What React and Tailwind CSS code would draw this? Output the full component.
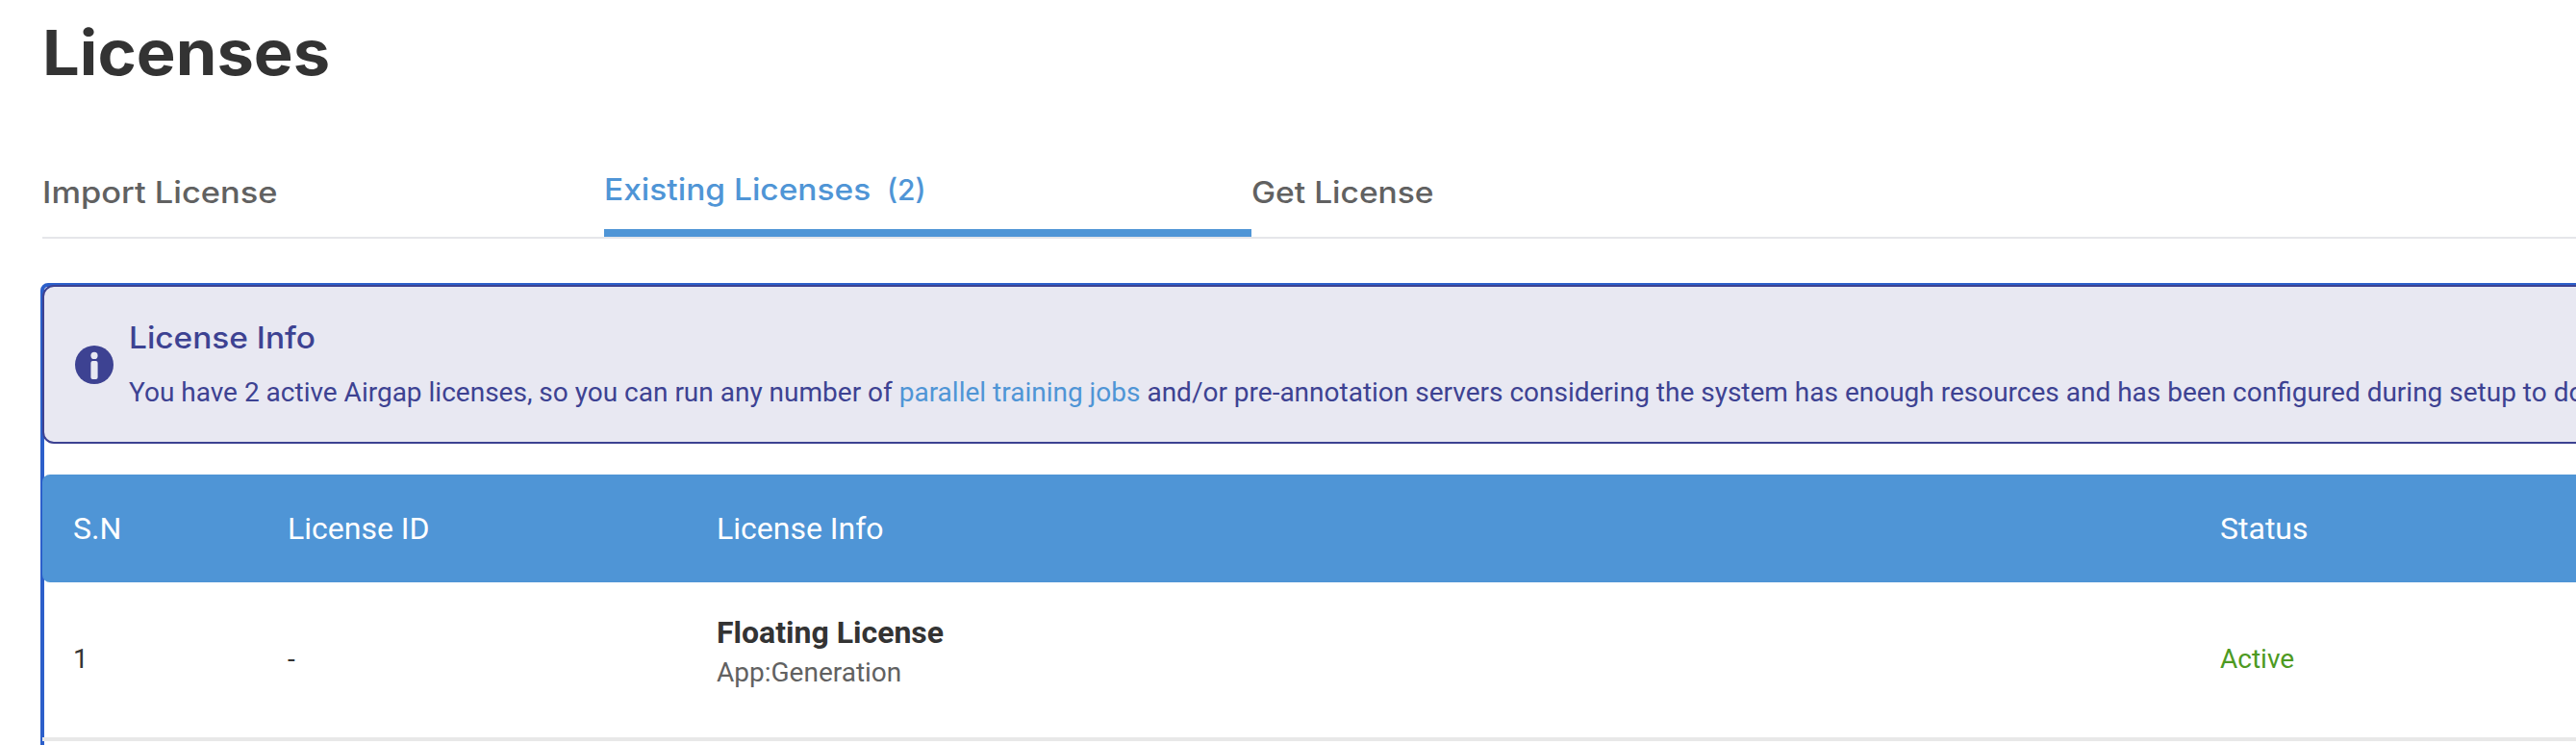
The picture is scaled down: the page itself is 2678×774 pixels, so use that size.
const columns = "grid grid-cols-[223px_446px_1563px_1fr] items-center pl-8";

function InfoIcon() {
  return (
    <svg viewBox="0 0 40 40" className="size-10 shrink-0" aria-hidden="true">
      <circle cx="20" cy="20" r="20" fill="#3d4292" />
      <circle cx="20" cy="10.4" r="3.6" fill="#e8e8f2" />
      <rect x="16.4" y="16" width="7.2" height="19" rx="2" fill="#e8e8f2" />
    </svg>
  );
}

function Tabs() {
  return (
    <nav className="ml-11 mt-[75px] flex h-[78px] border-b-2 border-[#e5e6ea] font-['Inter',sans-serif] text-[31px] leading-10 font-medium text-[#616161]">
      <button className="flex w-[584px] pt-[10px] text-left">
        <span className="origin-left scale-x-[1.11]">Import License</span>
      </button>
      <button className="flex w-[673px] border-b-8 border-[#4f95d6] pt-[7px] text-left text-[#4f95d6]">
        <span className="w-[294px]">
          <span className="inline-block origin-left scale-x-[1.08]">Existing Licenses</span>
        </span>
        <span className="text-[30px]">(2)</span>
      </button>
      <button className="flex pt-[10px]">
        <span className="origin-left scale-x-[1.082]">Get License</span>
      </button>
    </nav>
  );
}

function LicenseNotice() {
  return (
    <section className="-mt-0.5 -ml-0.5 flex h-[165px] items-center gap-4 rounded-[12px] border-2 border-[#3d4292] bg-[#e8e8f2] pl-8 text-[#3d4292]">
      <InfoIcon />
      <div className="flex flex-col items-start gap-[17px] pt-0.5">
        <h2 className="origin-left scale-x-[1.078] font-['Inter',sans-serif] text-[31px] leading-10 font-medium">
          License Info
        </h2>
        <p className="text-[28px] leading-10">
          You have 2 active Airgap licenses, so you can run any number of{" "}
          <a className="text-[#4f95d6]">parallel training jobs</a> and/or pre-annotation servers considering the
          system has enough resources and has been configured during setup to do
        </p>
      </div>
    </section>
  );
}

export default function App() {
  return (
    <main className="h-[774px] overflow-hidden bg-white font-['Roboto',sans-serif] text-[#333333]">
      <div className="w-[2800px] pt-[15px] whitespace-nowrap">
        <h1 className="ml-11 w-fit origin-left scale-x-[1.056] font-['Inter',sans-serif] text-[65px] leading-20 font-bold">
          Licenses
        </h1>
        <Tabs />
        <div className="mt-[46px] ml-[42px] h-[600px] rounded-[8px] border-4 border-[#2c5fca]">
          <LicenseNotice />
          <div className="-ml-0.5 pt-8">
            <div className={`${columns} h-28 rounded-[8px] bg-[#4f95d6] text-[32px] text-white`}>
              <span>S.N</span>
              <span>License ID</span>
              <span>License Info</span>
              <span>Status</span>
            </div>
            <div className={`${columns} h-[165px] border-b-4 border-[#e8e8e8] pb-0.5 text-[28px]`}>
              <span>1</span>
              <span>-</span>
              <div className="flex flex-col gap-0.5 pb-[14px]">
                <strong className="text-[32px] leading-10 font-bold">Floating License</strong>
                <span className="leading-10 text-[#616161]">App:Generation</span>
              </div>
              <span className="text-[#4d9a22]">Active</span>
            </div>
          </div>
        </div>
      </div>
    </main>
  );
}
